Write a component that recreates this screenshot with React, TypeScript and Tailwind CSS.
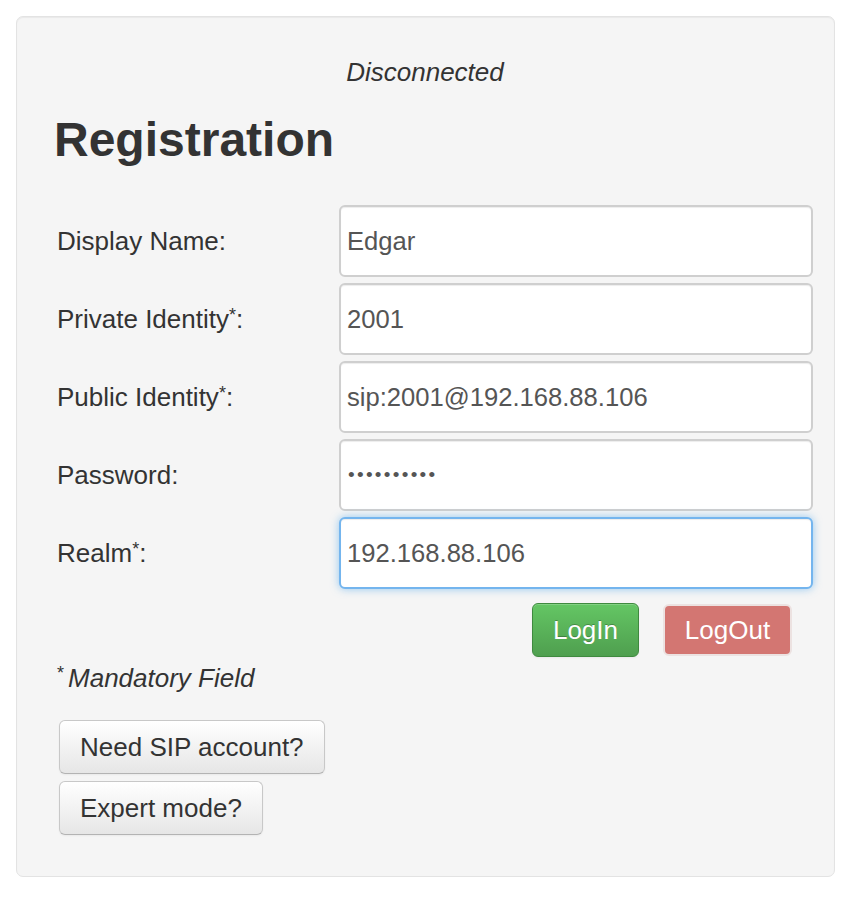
import React from "react";

const font = { fontFamily: '"Liberation Sans", Arial, Helvetica, sans-serif' };

function Row({ label, req, children }: { label: string; req?: boolean; children: React.ReactNode }) {
  return (
    <div className="flex items-center h-[72px]">
      <div className="w-[282px] shrink-0 text-[26px] leading-[32px] text-[#333]">
        {label}
        {req && <sup className="text-[18px] relative top-[-7px]">*</sup>}
        :
      </div>
      <div className="w-[474px] h-[72px]">{children}</div>
    </div>
  );
}

function Field({ value, type = "text", focus = false }: { value: string; type?: string; focus?: boolean }) {
  const pw = type === "password";
  return (
    <input
      readOnly
      type={type}
      value={value}
      style={font}
      className={
        "w-full h-full rounded-[6px] bg-white pr-2 text-[#555] outline-none border-2 " +
        (pw ? "text-[19px] tracking-[2.3px] pl-[7px] " : "text-[25.6px] pl-[6px] ") +
        (focus
          ? "border-[#74b5ee] shadow-[inset_0_1px_1px_rgba(0,0,0,0.075),0_0_8px_rgba(82,168,236,0.6)]"
          : "border-[#cfcfcf] shadow-[inset_0_1px_1px_rgba(0,0,0,0.075)]")
      }
    />
  );
}

export default function App() {
  return (
    <div className="w-[856px] h-[900px] bg-white pt-[16px] pl-[16px]" style={font}>
      <div className="w-[819px] h-[861px] bg-[#f5f5f5] border border-[#e3e3e3] rounded-[7px] shadow-[inset_0_1px_1px_rgba(0,0,0,0.05)] pl-[40px] pr-[21px] pt-[39px] flex flex-col">
        <div className="text-center italic text-[26px] leading-[32px] text-[#333] ml-[-20px]">Disconnected</div>
        <h1 className="mt-[28px] font-bold text-[48px] leading-[48px] text-[#333] ml-[-3px]">Registration</h1>
        <div className="mt-[41px] flex flex-col gap-[6px]">
          <Row label="Display Name">
            <Field value="Edgar" />
          </Row>
          <Row label="Private Identity" req>
            <Field value="2001" />
          </Row>
          <Row label="Public Identity" req>
            <Field value="sip:2001@192.168.88.106" />
          </Row>
          <Row label="Password">
            <Field value="1234567890" type="password" />
          </Row>
          <Row label="Realm" req>
            <Field value="192.168.88.106" focus />
          </Row>
        </div>
        <div className="mt-[14px] flex items-center justify-end gap-[24px] pr-[21px]">
          <button
            className="h-[54px] w-[107px] rounded-[6px] border border-[#3f8a3f] bg-gradient-to-b from-[#64c664] to-[#4f9f4f] text-white text-[26px] shadow-[inset_0_1px_0_rgba(255,255,255,0.2),0_1px_2px_rgba(0,0,0,0.05)] [text-shadow:0_-1px_0_rgba(0,0,0,0.25)]"
            style={font}
          >
            LogIn
          </button>
          <button
            className="h-[52px] w-[129px] rounded-[6px] border-2 border-[#ece2e1] bg-[#d37672] text-white text-[26px]"
            style={font}
          >
            LogOut
          </button>
        </div>
        <div className="mt-[5px] text-[26px] leading-[32px] text-[#333] flex items-start">
          <span className="text-[18px] leading-[18px] mt-[2px] mr-[4px]">*</span>
          <span className="italic">Mandatory Field</span>
        </div>
        <div className="mt-[26px] flex flex-col items-start gap-[7px] ml-[2px]">
          <button
            className="h-[54px] px-[20px] rounded-[6px] border border-[#c8c8c8] border-b-[#b3b3b3] bg-gradient-to-b from-white to-[#e6e6e6] text-[#333] text-[26px] shadow-[inset_0_1px_0_rgba(255,255,255,0.2),0_1px_2px_rgba(0,0,0,0.05)]"
            style={font}
          >
            Need SIP account?
          </button>
          <button
            className="h-[54px] px-[20px] rounded-[6px] border border-[#c8c8c8] border-b-[#b3b3b3] bg-gradient-to-b from-white to-[#e6e6e6] text-[#333] text-[26px] shadow-[inset_0_1px_0_rgba(255,255,255,0.2),0_1px_2px_rgba(0,0,0,0.05)]"
            style={font}
          >
            Expert mode?
          </button>
        </div>
      </div>
    </div>
  );
}
